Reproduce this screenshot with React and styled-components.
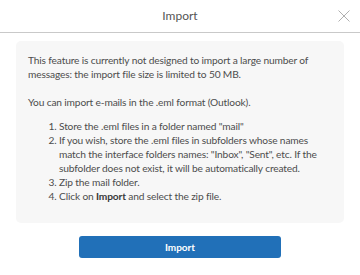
import React from "react";
import styled, { createGlobalStyle } from "styled-components";

const Global = createGlobalStyle`
  html, body { margin: 0; padding: 0; background: #fff; }
  body { font-family: Lato, "Open Sans", sans-serif; color: #4a4a4a; }
`;

const Dialog = styled.div`
  width: 360px;
  height: 275px;
  background: #fff;
`;

const Header = styled.header`
  display: grid;
  grid-template-columns: 1fr auto 1fr;
  align-items: center;
  height: 32px;
  border-bottom: 1px solid #c9c9c9;
`;

const Title = styled.h1`
  grid-column: 2;
  margin: 0;
  font-size: 12px;
  font-weight: 400;
  color: #555;
  line-height: 14px;
`;

const Close = styled.button`
  justify-self: end;
  margin-right: 10px;
  width: 13px;
  height: 13px;
  padding: 0;
  border: 0;
  background: none;
  display: flex;
  align-items: center;
  justify-content: center;
  cursor: pointer;
`;

const Body = styled.div`
  padding: 8px 16px 0;
`;

const InfoBox = styled.div`
  background: #f7f7f7;
  border-radius: 5px;
  padding: 12px 12px 20px;
  font-size: 10.2px;
  letter-spacing: -0.15px;
  line-height: 14px;
  color: #4d4d4d;
`;

const Para = styled.p`
  margin: 0 0 ${(p) => p.$gap}px;
`;

const Steps = styled.ol`
  margin: 0;
  padding-left: 31px;
`;

const Strong = styled.b`
  font-weight: 700;
  color: #3a3a3a;
`;

const Actions = styled.div`
  display: flex;
  justify-content: center;
  padding-top: 13px;
`;

const PrimaryButton = styled.button`
  width: 202px;
  height: 22px;
  border: 0;
  border-radius: 3px;
  background: #2170b8;
  color: #fff;
  font-family: Lato, "Open Sans", sans-serif;
  font-weight: 700;
  font-size: 10px;
  cursor: pointer;
`;

export default function App() {
  return (
    <>
      <Global />
      <Dialog>
        <Header>
          <Title>Import</Title>
          <Close aria-label="Close">
            <svg width="12" height="12" viewBox="0 0 12 12">
              <path d="M0.5 0.5 L11.5 11.5 M11.5 0.5 L0.5 11.5" stroke="#b0b0b0" strokeWidth="1" />
            </svg>
          </Close>
        </Header>
        <Body>
          <InfoBox>
            <Para $gap={14}>
              This feature is currently not designed to import a large number of messages: the import file size is limited to 50 MB.
            </Para>
            <Para $gap={10}>You can import e-mails in the .eml format (Outlook).</Para>
            <Steps>
              <li>Store the .eml files in a folder named "mail"</li>
              <li>
                If you wish, store the .eml files in subfolders whose names match the interface folders names: "Inbox", "Sent", etc. If the subfolder does not exist, it will be automatically created.
              </li>
              <li>Zip the mail folder.</li>
              <li>
                Click on <Strong>Import</Strong> and select the zip file.
              </li>
            </Steps>
          </InfoBox>
          <Actions>
            <PrimaryButton>Import</PrimaryButton>
          </Actions>
        </Body>
      </Dialog>
    </>
  );
}
